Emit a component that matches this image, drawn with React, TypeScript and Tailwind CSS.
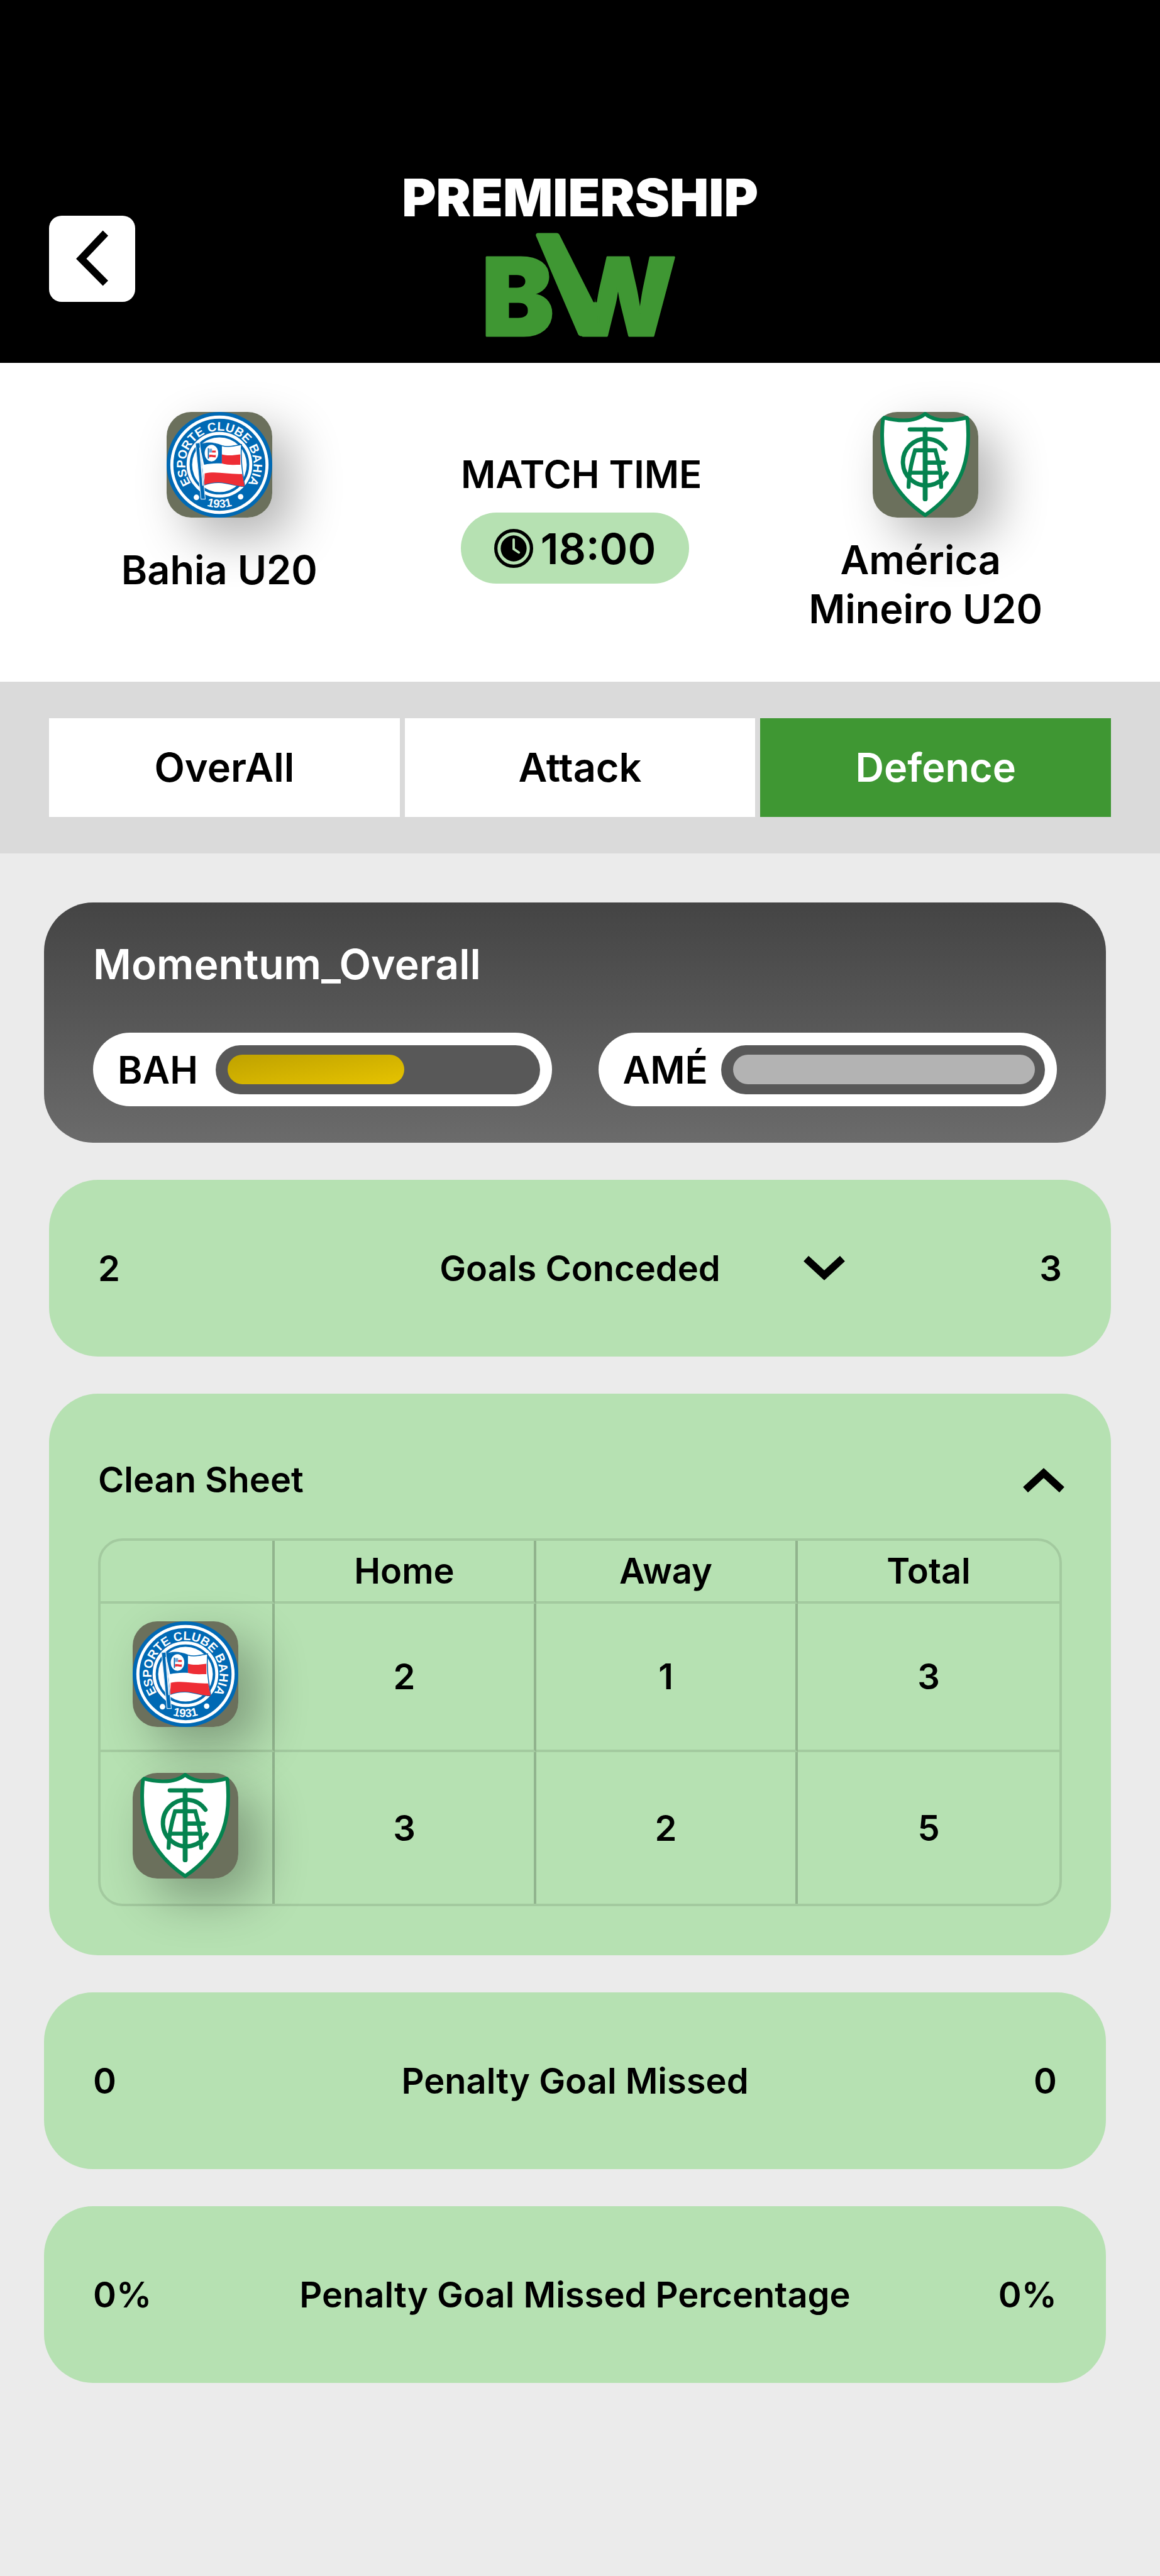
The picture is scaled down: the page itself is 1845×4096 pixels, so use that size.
import React from "react";

const BAHIA = "Bahia U20";
const AMERICA = "América \nMineiro U20";

function BahiaCrest() {
  return (
    <svg viewBox="0 0 172 172" className="h-full w-full" role="img" aria-label="Esporte Clube Bahia">
      <defs>
        <path id="bahia-top" d="M86 141.5 A55.5 55.5 0 1 1 86.1 141.5" />
        <path id="bahia-bottom" d="M16 86 A70 70 0 0 0 156 86" />
      </defs>
      <circle cx="86" cy="86" r="86" fill="#0069b4" />
      <circle cx="86" cy="86" r="77.5" fill="none" stroke="#fff" strokeWidth="5" />
      <circle cx="86" cy="86" r="51" fill="none" stroke="#fff" strokeWidth="5" />
      <circle cx="86" cy="86" r="44.5" fill="#fff" />
      <g fill="#fff" fontFamily="Liberation Sans, Arial, sans-serif" fontWeight="700" textAnchor="middle">
        <text fontSize="20">
          <textPath href="#bahia-top" startOffset="50%">ESPORTE CLUBE BAHIA</textPath>
        </text>
        <text fontSize="19">
          <textPath href="#bahia-bottom" startOffset="50%">1931</textPath>
        </text>
      </g>
      <circle cx="48.5" cy="139" r="4.5" fill="#fff" />
      <circle cx="120.5" cy="138" r="4.5" fill="#fff" />
      <path d="M53 54 C66 48 78 50 90 55 C101 58 111 55 122 53 C120 78 124 100 127 121 C108 122 90 108 61 119 Z" fill="#fff" stroke="#0069b4" strokeWidth="1.6" />
      <path d="M54 54 C66 49 78 51 90 55 V84 C80 83 70 84 61 86 Z" fill="#0069b4" />
      <path d="M90 69 C101 72 110 70 120 69 V86 C110 86 100 87 90 84 Z" fill="#ee2d35" />
      <path d="M62 100 C82 96 100 102 123 101 L127 121 C108 122 90 108 61 119 Z" fill="#ee2d35" />
      <ellipse cx="73" cy="67" rx="11" ry="13.5" fill="#fff" />
      <path d="M68 59 V76" stroke="#0069b4" strokeWidth="1.8" />
      <path d="M69 60 h5 v6 h-5 z" fill="#6ea6d6" />
      <path d="M74 63 h6 v3 h-6 z M69 70 c4 -1 7 1 11 0 v4 c-4 0 -7 -2 -11 0 z" fill="#ee2d35" />
      <path d="M47 51 L54 50 L63 142 L56 142 Z" fill="#0069b4" stroke="#d5e6f4" strokeWidth="1.2" />
      <path d="M54 58 L59 120" stroke="#fff" strokeWidth="1.6" />
    </svg>
  );
}

function AmericaCrest() {
  return (
    <svg viewBox="0 0 172 172" className="h-full w-full" role="img" aria-label="América Mineiro">
      <path
        d="M85.5 3 C70 16 45 16 17 9 C11 66 18 122 85.5 168 C153 122 160 66 154 9 C126 16 101 16 85.5 3 Z"
        fill="#fff"
        stroke="#04834f"
        strokeWidth="6"
        strokeLinejoin="round"
      />
      <g fill="none" stroke="#04834f" strokeWidth="7" strokeLinecap="round">
        <path d="M60.500 28.500 H111.500" />
        <path d="M85.500 29 V141.500" strokeWidth="8" />
        <path d="M118.500 60 A38 38 0 1 0 120.500 100" />
        <path d="M58.500 122 C59 100 63 82 69 62.500 H102 C108 82 111.500 100 111.500 122" strokeWidth="6.500" />
        <path d="M62 99 H110" strokeWidth="6.500" />
        <path d="M86 82.500 H115.500" />
      </g>
    </svg>
  );
}

type Team = "bahia" | "america";

function TeamBadge({ team }: { team: Team }) {
  return (
    <div className="h-[168px] w-[168px] shrink-0 rounded-[39px] shadow-[31px_31px_78px_rgba(0,0,0,0.3)]">
      <div className="h-full w-full overflow-hidden rounded-[39px] bg-[#6b705c]">
        {team === "bahia" ? <BahiaCrest /> : <AmericaCrest />}
      </div>
    </div>
  );
}

function Chevron({ up = false }: { up?: boolean }) {
  return (
    <svg viewBox="0 0 68 40" className="h-[39px] w-[66px]" aria-hidden="true">
      <polyline
        points={up ? "4.2,35.800 34,8.300 63.800,35.800" : "4.2,4.2 34,31.700 63.800,4.2"}
        fill="none"
        stroke="#000"
        strokeWidth="12"
      />
    </svg>
  );
}

function Brand() {
  return (
    <div className="flex flex-col items-center gap-[22px]">
      <h1 className="whitespace-nowrap text-[83px] font-black leading-[58px] text-white">PREMIERSHIP</h1>
      <svg
        viewBox="-12 -4 324 216"
        className="-mb-[44px] h-[216px] w-[324px] overflow-visible"
        role="img"
        aria-label="BW"
      >
        <g
          fill="#3f9733"
          stroke="#3f9733"
          strokeWidth="3"
          strokeLinejoin="round"
          fontFamily="Inter, sans-serif"
          fontWeight="900"
          fontSize="172"
        >
          <text x="-6" y="165">B</text>
          <text x="118" y="165">W</text>
        </g>
        <path d="M133 34 H180 L174 114 H168 Z" fill="#000" />
        <path
          d="M84 3 H113 Q116 3 117 6 L171 113 H178 L182 164 H152 Q149 164 148 160 L82 6 Q81 3 84 3 Z"
          fill="#3f9733"
          stroke="#3f9733"
          strokeWidth="3"
          strokeLinejoin="round"
        />
      </svg>
    </div>
  );
}

function Header() {
  return (
    <header className="grid grid-cols-[1fr_auto_1fr] items-start bg-black px-[78px] pb-[40px] pt-[285px]">
      <button type="button" aria-label="Back" className="mt-[58px] h-[137px] w-[137px] rounded-[20px] bg-white">
        <svg viewBox="0 0 140 140" className="h-full w-full" aria-hidden="true">
          <polyline points="91.800,28.200 52.300,70 91.800,109.800" fill="none" stroke="#000" strokeWidth="12" />
        </svg>
      </button>
      <Brand />
    </header>
  );
}

function MatchInfo() {
  return (
    <section className="grid grid-cols-3 bg-white pb-[77px] pl-[68px] pr-[92px] pt-[78px] text-[63px] font-semibold leading-[78px]">
      <div className="flex flex-col items-center gap-[44px]">
        <TeamBadge team="bahia" />
        <p className="whitespace-nowrap text-center">{BAHIA}</p>
      </div>
      <div className="flex flex-col items-center pl-2 pt-[60px]">
        <div className="flex w-[363px] flex-col gap-[22px]">
          <p className="whitespace-nowrap text-[60px]">MATCH TIME</p>
          <div className="flex h-[113px] items-center justify-center gap-3 rounded-full bg-[#b6e1b2]">
            <svg viewBox="0 0 64 64" className="h-[62px] w-[62px]" aria-hidden="true">
              <circle cx="32" cy="32" r="29.300" fill="none" stroke="#000" strokeWidth="5.400" />
              <circle cx="32" cy="32" r="21.300" fill="#000" />
              <polyline
                points="32,17.500 32,33 40.500,38.700"
                fill="none"
                stroke="#b6e1b2"
                strokeWidth="4"
                strokeLinecap="round"
                strokeLinejoin="round"
              />
            </svg>
            <time className="text-[68px]">18:00</time>
          </div>
        </div>
      </div>
      <div className="flex flex-col items-center gap-[28px]">
        <TeamBadge team="america" />
        <p className="relative whitespace-pre text-center">{AMERICA}</p>
      </div>
    </section>
  );
}

const TABS = ["OverAll", "Attack", "Defence"];

function Tabs() {
  return (
    <nav className="grid grid-cols-3 gap-2 bg-[#dadada] px-[78px] py-[58px]">
      {TABS.map((tab) => (
        <button
          key={tab}
          type="button"
          className={
            tab === "Defence"
              ? "h-[157px] bg-[#3f9733] text-[63px] font-semibold text-white"
              : "h-[157px] bg-white text-[63px] font-semibold text-black"
          }
        >
          {tab}
        </button>
      ))}
    </nav>
  );
}

function MomentumBar({ label, percent, barClass }: { label: string; percent: number; barClass: string }) {
  return (
    <div className="flex h-[117px] flex-1 items-center rounded-full bg-white pl-[39px] pr-[19px]">
      <span className="w-[156px] text-[60px] font-semibold">{label}</span>
      <div className="flex h-[78px] flex-1 items-center rounded-full bg-[#585858] pl-[19px] pr-[16px]">
        <div className={barClass} style={{ width: `${percent}%` }} />
      </div>
    </div>
  );
}

function Momentum() {
  return (
    <section className="ml-[70px] mr-[86px] rounded-[78px] bg-linear-to-b from-[#444444] to-[#6b6b6b] px-[78px] pb-[58px] pt-[59px]">
      <h2 className="text-[66px] font-semibold leading-[78px] text-white">Momentum_Overall</h2>
      <div className="mt-[70px] flex gap-[74px]">
        <MomentumBar
          label="BAH"
          percent={58.5}
          barClass="h-[47px] rounded-full bg-linear-to-br from-[#bfa200] to-[#e6c300]"
        />
        <MomentumBar label="AMÉ" percent={100} barClass="h-[47px] rounded-full bg-[#b3b3b3]" />
      </div>
    </section>
  );
}

function StatRow({
  home,
  label,
  away,
  expandable = false,
}: {
  home: string;
  label: string;
  away: string;
  expandable?: boolean;
}) {
  return (
    <section
      className={
        expandable
          ? "ml-[78px] mr-[78px] grid h-[281px] grid-cols-[1fr_auto_1fr] items-center rounded-[78px] bg-[#b6e1b2] px-[78px] text-[56px] font-semibold"
          : "ml-[70px] mr-[86px] grid h-[281px] grid-cols-[1fr_auto_1fr] items-center rounded-[78px] bg-[#b6e1b2] px-[78px] text-[56px] font-semibold"
      }
    >
      <span>{home}</span>
      <h2 className="whitespace-nowrap">{label}</h2>
      <div className="flex items-center justify-end">
        {expandable && (
          <button type="button" aria-label={`Expand ${label}`} className="ml-[132px] mr-auto">
            <Chevron />
          </button>
        )}
        <span>{away}</span>
      </div>
    </section>
  );
}

const CLEAN_SHEET: { team: Team; name: string; values: string[] }[] = [
  { team: "bahia", name: "Bahia U20", values: ["2", "1", "3"] },
  { team: "america", name: "América Mineiro U20", values: ["3", "2", "5"] },
];

function CleanSheet() {
  return (
    <section className="mx-[78px] rounded-[78px] bg-[#b6e1b2] px-[78px] pb-[78px] pt-[98px] text-[56px] font-semibold">
      <div className="flex items-center justify-between">
        <h2 className="leading-[78px]">Clean Sheet</h2>
        <button type="button" aria-label="Collapse Clean Sheet" className="-mr-1">
          <Chevron up />
        </button>
      </div>
      <div className="mt-[54px] rounded-[39px] border-4 border-black/10">
        <table className="w-full table-fixed border-separate border-spacing-0 text-center">
          <thead>
            <tr className="h-[100px]">
              <td className="w-[277px] border-b-4 border-r-4 border-b-black/10 border-r-black/20" />
              <th className="border-b-4 border-r-4 border-b-black/10 border-r-black/20 p-0 font-semibold">Home</th>
              <th className="border-b-4 border-r-4 border-b-black/10 border-r-black/20 p-0 font-semibold">Away</th>
              <th className="border-b-4 border-b-black/10 p-0 font-semibold">Total</th>
            </tr>
          </thead>
          <tbody>
            <tr className="h-[236px]">
              <th aria-label={CLEAN_SHEET[0].name} className="border-b-4 border-r-4 border-b-black/10 border-r-black/20 p-0">
                <div className="mb-2 ml-[51px]">
                  <TeamBadge team="bahia" />
                </div>
              </th>
              <td className="border-b-4 border-r-4 border-b-black/10 border-r-black/20 p-0">{CLEAN_SHEET[0].values[0]}</td>
              <td className="border-b-4 border-r-4 border-b-black/10 border-r-black/20 p-0">{CLEAN_SHEET[0].values[1]}</td>
              <td className="border-b-4 border-b-black/10 p-0">{CLEAN_SHEET[0].values[2]}</td>
            </tr>
            <tr className="h-[241px]">
              <th aria-label={CLEAN_SHEET[1].name} className="border-r-4 border-r-black/20 p-0">
                <div className="mb-2 ml-[51px]">
                  <TeamBadge team="america" />
                </div>
              </th>
              <td className="border-r-4 border-r-black/20 p-0">{CLEAN_SHEET[1].values[0]}</td>
              <td className="border-r-4 border-r-black/20 p-0">{CLEAN_SHEET[1].values[1]}</td>
              <td className="p-0">{CLEAN_SHEET[1].values[2]}</td>
            </tr>
          </tbody>
        </table>
      </div>
    </section>
  );
}

export default function App() {
  return (
    <div className="min-h-screen bg-[#ebebeb] font-['Inter',sans-serif] text-black">
      <Header />
      <MatchInfo />
      <Tabs />
      <main className="flex flex-col gap-[59px] py-[78px]">
        <Momentum />
        <StatRow home="2" label="Goals Conceded" away="3" expandable />
        <CleanSheet />
        <StatRow home="0" label="Penalty Goal Missed" away="0" />
        <StatRow home="0%" label="Penalty Goal Missed Percentage" away="0%" />
      </main>
    </div>
  );
}
